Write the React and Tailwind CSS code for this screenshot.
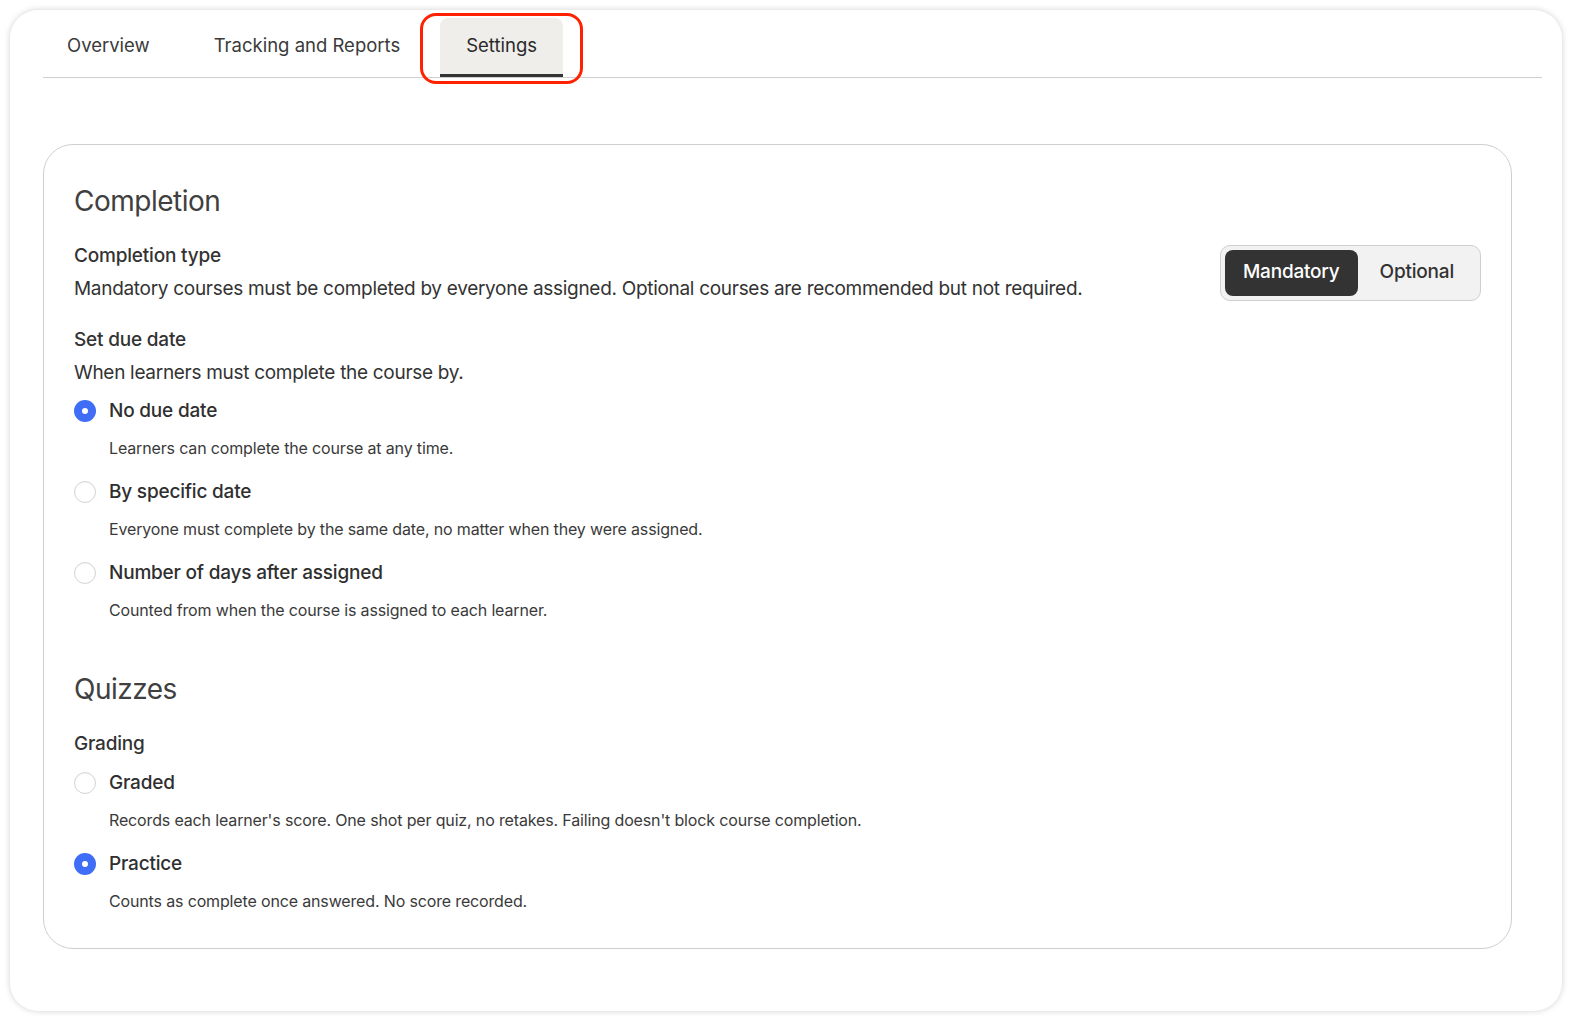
import { useState } from "react";

const tabs = ["Overview", "Tracking and Reports", "Settings"];

const dueOptions = [
  { id: "none", label: "No due date", help: "Learners can complete the course at any time." },
  {
    id: "date",
    label: "By specific date",
    help: "Everyone must complete by the same date, no matter when they were assigned.",
  },
  {
    id: "days",
    label: "Number of days after assigned",
    help: "Counted from when the course is assigned to each learner.",
  },
];

const gradingOptions = [
  {
    id: "graded",
    label: "Graded",
    help: "Records each learner's score. One shot per quiz, no retakes. Failing doesn't block course completion.",
  },
  { id: "practice", label: "Practice", help: "Counts as complete once answered. No score recorded." },
];

function Radio({ checked }) {
  return checked ? (
    <span className="flex h-[22px] w-[22px] shrink-0 items-center justify-center rounded-full bg-[#3f6df6]">
      <span className="h-[6px] w-[6px] rounded-full bg-white" />
    </span>
  ) : (
    <span className="h-[22px] w-[22px] shrink-0 rounded-full border border-[#d4d4d4] bg-white shadow-[inset_0_1px_1px_rgba(0,0,0,0.04)]" />
  );
}

function RadioGroup({ options, value, onChange }) {
  return (
    <div className="flex flex-col">
      {options.map((opt, i) => (
        <div key={opt.id} className={i === 0 ? "" : "mt-[18px]"}>
          <button
            onClick={() => onChange(opt.id)}
            className="flex items-center gap-[13px] text-[19px] leading-[28px] font-medium tracking-[-0.2px] text-[#2f2f2f]"
          >
            <Radio checked={value === opt.id} />
            {opt.label}
          </button>
          <p className="mt-[11px] pl-[35px] text-[16px] leading-[24px] tracking-[-0.15px] text-[#3a3a3a]">
            {opt.help}
          </p>
        </div>
      ))}
    </div>
  );
}

export default function App() {
  const [tab, setTab] = useState("Settings");
  const [type, setType] = useState("Mandatory");
  const [due, setDue] = useState("none");
  const [grading, setGrading] = useState("practice");

  return (
    <div className="min-h-screen bg-white p-[10px] font-['Inter',sans-serif] text-[#333]">
      <div className="h-[1001px] w-[1552px] rounded-[28px] bg-white pt-[8px] pl-[33px] pr-[20px] shadow-[0_0_6px_rgba(0,0,0,0.18)]">
        {/* tab bar */}
        <div className="flex gap-4 border-b border-[#cfcfcf]">
          {tabs.map((t) => {
            const active = t === tab;
            return (
              <div key={t} className="relative">
                <button
                  onClick={() => setTab(t)}
                  className={
                    "flex h-[59px] items-center border-b-[3px] text-[18.5px] " +
                    (active
                      ? "rounded-t-[8px] border-[#333] bg-[#efeeea] px-[26px] text-[#2a2a2a]"
                      : "border-transparent px-6 text-[#3a3a3a]")
                  }
                >
                  {t}
                </button>
                {active && (
                  <div className="pointer-events-none absolute -top-[5px] -left-[20px] -right-[20px] h-[71px] rounded-[16px] border-[3px] border-[#ff2200]" />
                )}
              </div>
            );
          })}
        </div>

        {/* settings panel */}
        <div className="mt-[66px] mr-[30px] rounded-[30px] border border-[#cfcfcf] px-[30px] pt-[38px] pb-[35px]">
          <h2 className="text-[28px] leading-[36px] tracking-[-0.5px] text-[#404040]">Completion</h2>

          <div className="mt-[23px] flex items-center justify-between">
            <div>
              <h3 className="text-[19px] leading-[28px] font-medium tracking-[-0.2px] text-[#333]">
                Completion type
              </h3>
              <p className="mt-[5px] text-[19px] leading-[28px] tracking-[-0.3px] text-[#333]">
                Mandatory courses must be completed by everyone assigned. Optional courses are recommended but not
                required.
              </p>
            </div>
            <div className="flex rounded-[10px] border border-[#cfcfcf] bg-[#f2f2f2] p-[4px]">
              {["Mandatory", "Optional"].map((o) => (
                <button
                  key={o}
                  onClick={() => setType(o)}
                  className={
                    "h-[46px] rounded-[8px] text-[19px] font-medium tracking-[-0.2px] " +
                    (type === o ? "bg-[#333] px-[18px] text-white" : "px-[22px] text-[#333]")
                  }
                >
                  {o}
                </button>
              ))}
            </div>
          </div>

          <h3 className="mt-[23px] text-[19px] leading-[28px] font-medium tracking-[-0.2px] text-[#333]">
            Set due date
          </h3>
          <p className="mt-[5px] text-[19px] leading-[28px] tracking-[-0.3px] text-[#333]">
            When learners must complete the course by.
          </p>
          <div className="mt-[10px]">
            <RadioGroup options={dueOptions} value={due} onChange={setDue} />
          </div>

          <h2 className="mt-[49px] text-[28px] leading-[36px] tracking-[-0.5px] text-[#404040]">Quizzes</h2>
          <h3 className="mt-[23px] text-[19px] leading-[28px] font-medium tracking-[-0.2px] text-[#333]">Grading</h3>
          <div className="mt-[11px]">
            <RadioGroup options={gradingOptions} value={grading} onChange={setGrading} />
          </div>
        </div>
      </div>
    </div>
  );
}
